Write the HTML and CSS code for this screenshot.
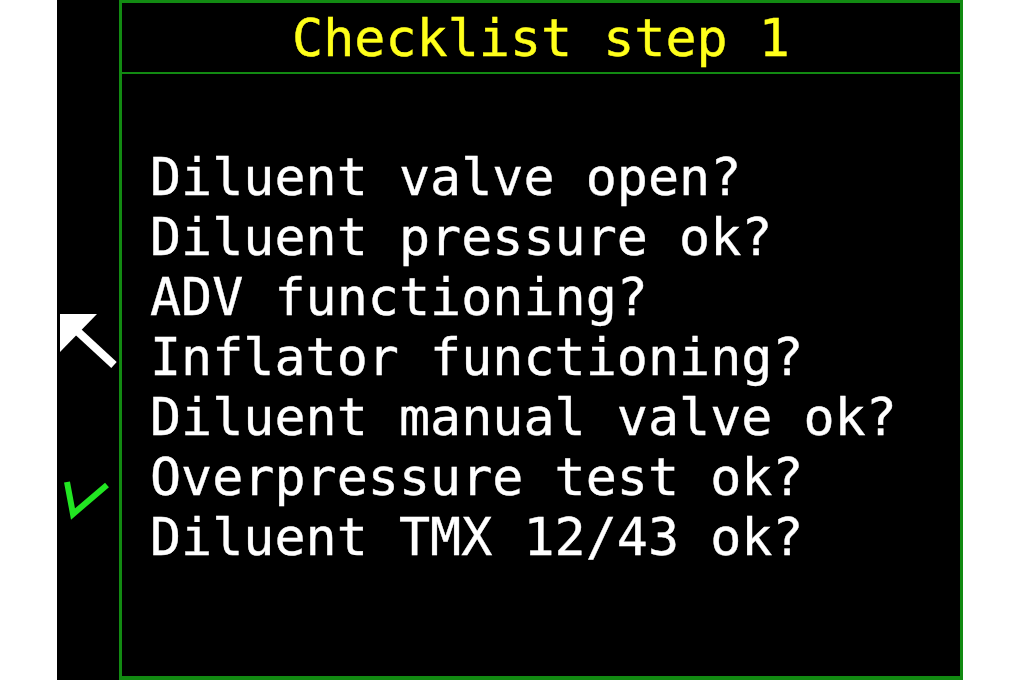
FILE: index.html
```html
<!DOCTYPE html>
<html lang="en">
<head>
<meta charset="utf-8">
<title>Checklist step 1</title>
<link rel="stylesheet" href="styles.css">
</head>
<body>
<div class="screen">
  <div class="side">
    <svg class="icon-back" width="62" height="62" viewBox="0 0 62 62">
      <polygon points="3,4 40,4 3,42" fill="#fff"/>
      <line x1="18" y1="19" x2="57" y2="55" stroke="#fff" stroke-width="8"/>
    </svg>
    <svg class="icon-ok" width="62" height="42" viewBox="0 0 62 42">
      <polyline points="10,2 16,34 50,5" fill="none" stroke="#22e622" stroke-width="6" stroke-linejoin="miter"/>
    </svg>
  </div>
  <div class="panel">
    <div class="title">Checklist step 1</div>
    <div class="items">
      <div class="item">Diluent valve open?</div>
      <div class="item">Diluent pressure ok?</div>
      <div class="item">ADV functioning?</div>
      <div class="item">Inflator functioning?</div>
      <div class="item">Diluent manual valve ok?</div>
      <div class="item">Overpressure test ok?</div>
      <div class="item">Diluent TMX 12/43 ok?</div>
    </div>
  </div>
</div>
</body>
</html>
```

FILE: styles.css
```css
html, body {
  margin: 0;
  padding: 0;
  background: #fff;
}
.screen {
  margin-left: 57px;
  width: 906px;
  height: 680px;
  background: #000;
  display: flex;
  font-family: "DejaVu Sans Mono", "Liberation Mono", monospace;
}
.side {
  width: 62px;
  flex: none;
  display: flex;
  flex-direction: column;
  align-items: flex-start;
  padding-top: 310px;
  box-sizing: border-box;
}
.side svg {
  display: block;
}
.icon-ok {
  margin-top: 108px;
}
.panel {
  flex: 1;
  border: 3px solid #128a12;
  border-bottom-width: 4px;
  display: flex;
  flex-direction: column;
  box-sizing: border-box;
  height: 680px;
}
.title {
  height: 69px;
  flex: none;
  border-bottom: 2px solid #128a12;
  color: #ffff1a;
  font-size: 51.7px;
  -webkit-text-stroke: 0.4px #ffff1a;
  display: flex;
  align-items: center;
  justify-content: center;
  white-space: pre;
}
.items {
  padding-top: 73px;
  padding-left: 28px;
  color: #fff;
  font-size: 51.7px;
  line-height: 60px;
  -webkit-text-stroke: 0.4px #fff;
}
.item {
  white-space: pre;
}
```
